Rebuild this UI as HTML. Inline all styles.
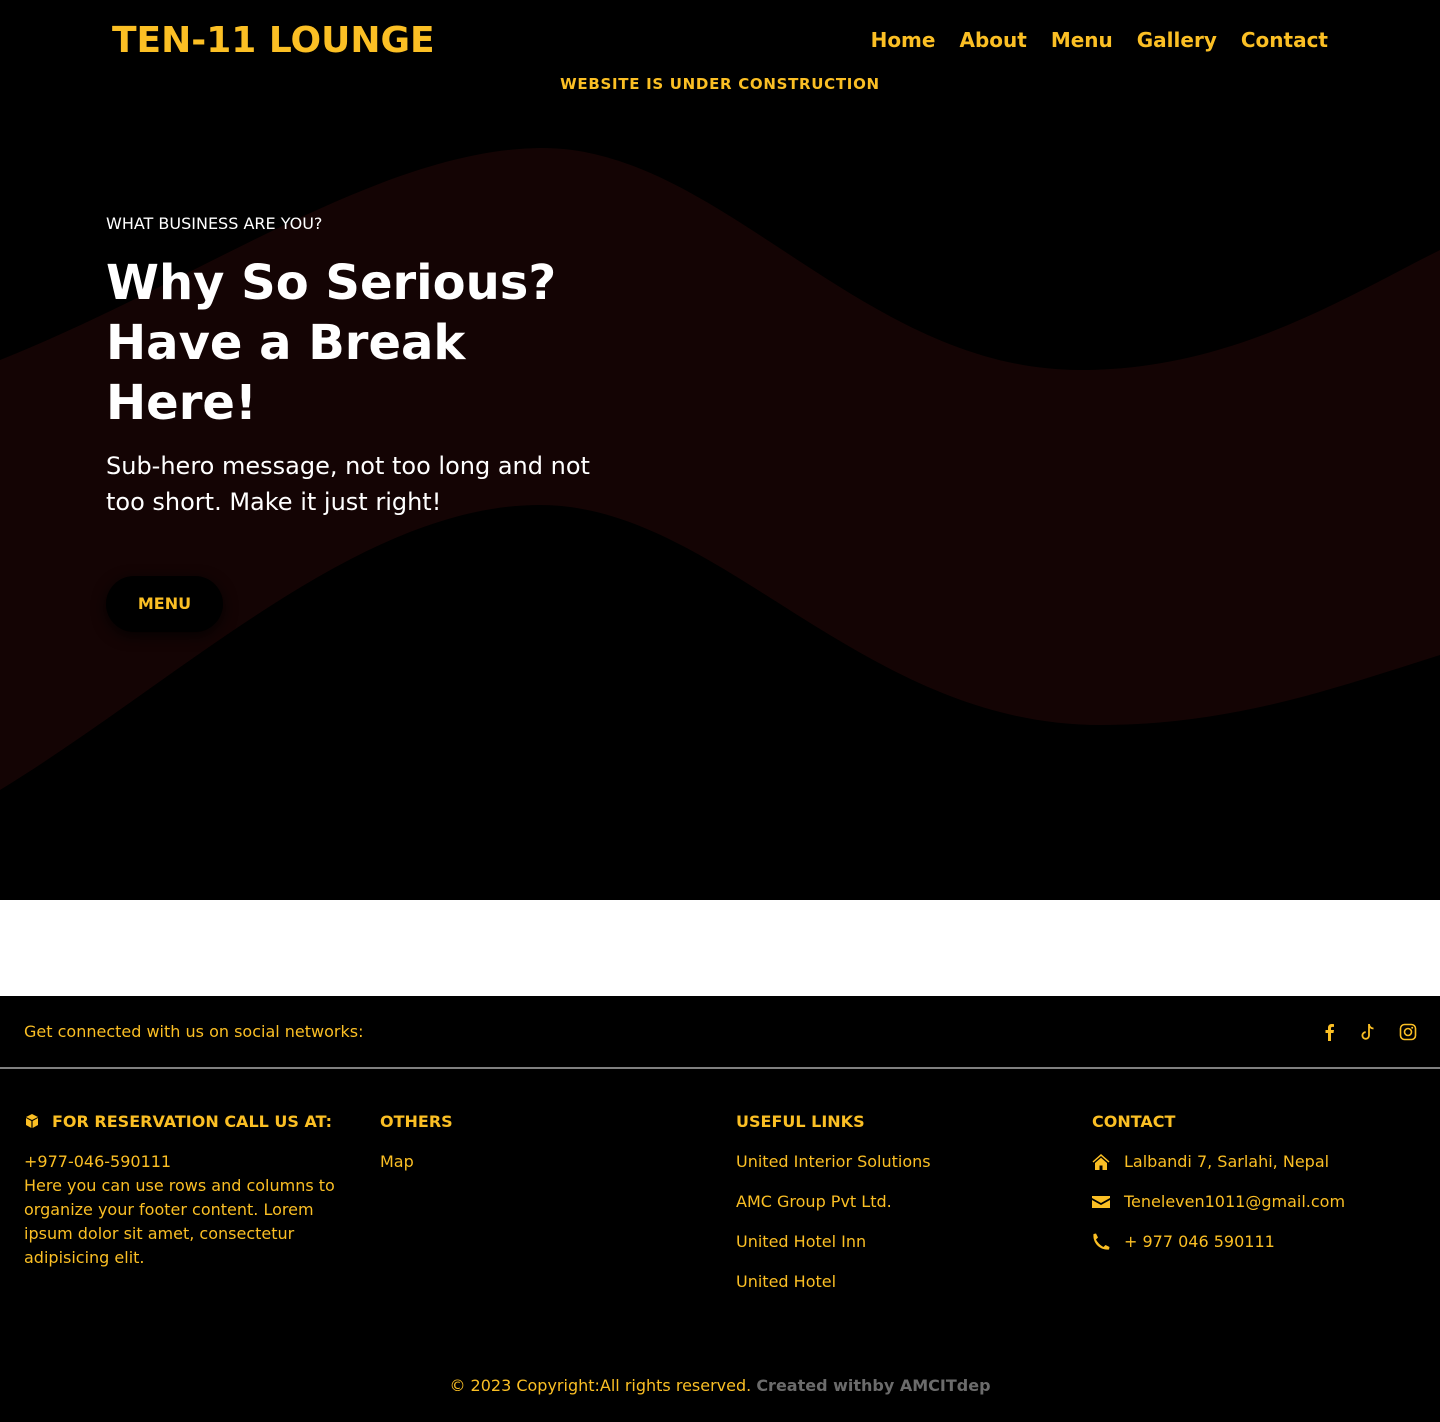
<!DOCTYPE html>
<html><head><meta charset="utf-8"><style>
*{margin:0;padding:0;box-sizing:border-box}
body{width:1440px;height:1422px;background:#000;font-family:"DejaVu Sans","Liberation Sans",sans-serif;color:#fbbf24;overflow:hidden;position:relative}
.abs{position:absolute}
.logo{left:112px;top:20px;font-size:36px;font-weight:bold;letter-spacing:0}
.nav{top:28px;right:112px;display:flex;gap:24px;font-size:20px;font-weight:bold}
.uc{top:75px;left:0;width:1440px;text-align:center;font-size:15px;font-weight:bold;letter-spacing:0.7px}
.hero{left:106px;top:214px;width:520px;color:#fff}
.hero .k{font-size:16px}
.hero h1{font-size:48px;line-height:60px;margin-top:20px;font-weight:bold}
.hero p{font-size:24px;line-height:36px;margin-top:15px}
.btn{left:106px;top:576px;width:117px;height:56px;border-radius:28px;background:#000;box-shadow:0 4px 14px rgba(0,0,0,.8);color:#fbbf24;font-weight:bold;font-size:16px;text-align:center;line-height:56px}
.white{left:0;top:900px;width:1440px;height:96px;background:#fff}
.soc{left:24px;top:1022px;font-size:16px}
.line{left:0;top:1067px;width:1440px;height:2px;background:#808080}
.col{top:1110px;font-size:16px;line-height:24px}
.col h4{font-size:16px;font-weight:bold;margin-bottom:16px;letter-spacing:0}
.col .l{margin-bottom:16px}
.ci{display:flex;align-items:center;gap:14px;margin-bottom:16px}
.copy{top:1376px;left:0;width:1440px;text-align:center;font-size:16px}
</style></head><body>
<svg class="abs" style="left:0;top:0" width="1440" height="900">
<path d="M0 360 C200 280 380 150 540 148 C720 146 860 370 1080 370 C1230 370 1340 300 1440 250 L1440 655 C1330 690 1230 725 1100 725 C860 725 720 505 540 505 C360 505 180 680 0 790 Z" fill="#140404"/>
</svg>
<div class="abs logo">TEN-11 LOUNGE</div>
<div class="abs nav"><span>Home</span><span>About</span><span>Menu</span><span>Gallery</span><span>Contact</span></div>
<div class="abs uc">WEBSITE IS UNDER CONSTRUCTION</div>
<div class="abs hero"><div class="k">WHAT BUSINESS ARE YOU?</div><h1>Why So Serious? Have a Break Here!</h1><p>Sub-hero message, not too long and not too short. Make it just right!</p></div>
<div class="abs btn">MENU</div>
<div class="abs white"></div>
<div class="abs soc">Get connected with us on social networks:</div>
<svg class="abs" style="left:1322px;top:1023px" width="14" height="18" viewBox="0 0 14 18"><path d="M9 18V10h2.5l.5-3H9V5.3c0-.9.3-1.4 1.5-1.4H12V1.2C11.6 1.1 10.7 1 9.8 1 7.6 1 6 2.3 6 4.8V7H3.5v3H6v8z" fill="#fbbf24"/></svg>
<svg class="abs" style="left:1358px;top:1022px" width="20" height="20" viewBox="0 0 20 20"><path d="M11 2v11.5a3.3 3.3 0 1 1-3.3-3.3M11 2c0 2.8 2.2 4.5 4.5 4.5" fill="none" stroke="#fbbf24" stroke-width="1.8"/></svg>
<svg class="abs" style="left:1399px;top:1023px" width="18" height="18" viewBox="0 0 18 18"><rect x="1.5" y="1.5" width="15" height="15" rx="4" fill="none" stroke="#fbbf24" stroke-width="1.6"/><circle cx="9" cy="9" r="3.5" fill="none" stroke="#fbbf24" stroke-width="1.6"/><circle cx="13.2" cy="4.8" r="1" fill="#fbbf24"/></svg>
<div class="abs line"></div>
<div class="abs col" style="left:24px;width:320px"><h4><span style="display:inline-block;width:28px"><svg width="16" height="16" viewBox="0 0 16 16" style="vertical-align:-2px"><path d="M8 1 14 4 8 7 2 4Z M2 5 7.4 8v7L2 12Z M14 5 8.6 8v7L14 12Z" fill="#fbbf24"/></svg></span>FOR RESERVATION CALL US AT:</h4>+977-046-590111<br>Here you can use rows and columns to organize your footer content. Lorem ipsum dolor sit amet, consectetur adipisicing elit.</div>
<div class="abs col" style="left:380px"><h4>OTHERS</h4><div class="l">Map</div></div>
<div class="abs col" style="left:736px"><h4>USEFUL LINKS</h4><div class="l">United Interior Solutions</div><div class="l">AMC Group Pvt Ltd.</div><div class="l">United Hotel Inn</div><div class="l">United Hotel</div></div>
<div class="abs col" style="left:1092px"><h4>CONTACT</h4>
<div class="ci"><svg width="18" height="18" viewBox="0 0 18 18"><path d="M9 1 0.5 8.5l1 1L9 3l7.5 6.5 1-1z M3 10v7h4.5v-4.5h3V17H15v-7L9 4.8z" fill="#fbbf24"/></svg>Lalbandi 7, Sarlahi, Nepal</div>
<div class="ci"><svg width="18" height="18" viewBox="0 0 18 18"><path d="M0 3h18v2L9 10 0 5z M0 7l9 5 9-5v8H0z" fill="#fbbf24"/></svg>Teneleven1011@gmail.com</div>
<div class="ci"><svg width="18" height="18" viewBox="0 0 18 18"><path d="M4 0.5 1.5 1C0.5 10 8 17.5 17 16.5l.5-2.5-4-2-2 2C8.5 12.5 5.5 9.5 4 6.5l2-2z" fill="#fbbf24"/></svg>+ 977 046 590111</div>
</div>
<div class="abs copy">© 2023 Copyright:All rights reserved. <b style="color:#6b6b6b">Created withby AMCITdep</b></div>
</body></html>
